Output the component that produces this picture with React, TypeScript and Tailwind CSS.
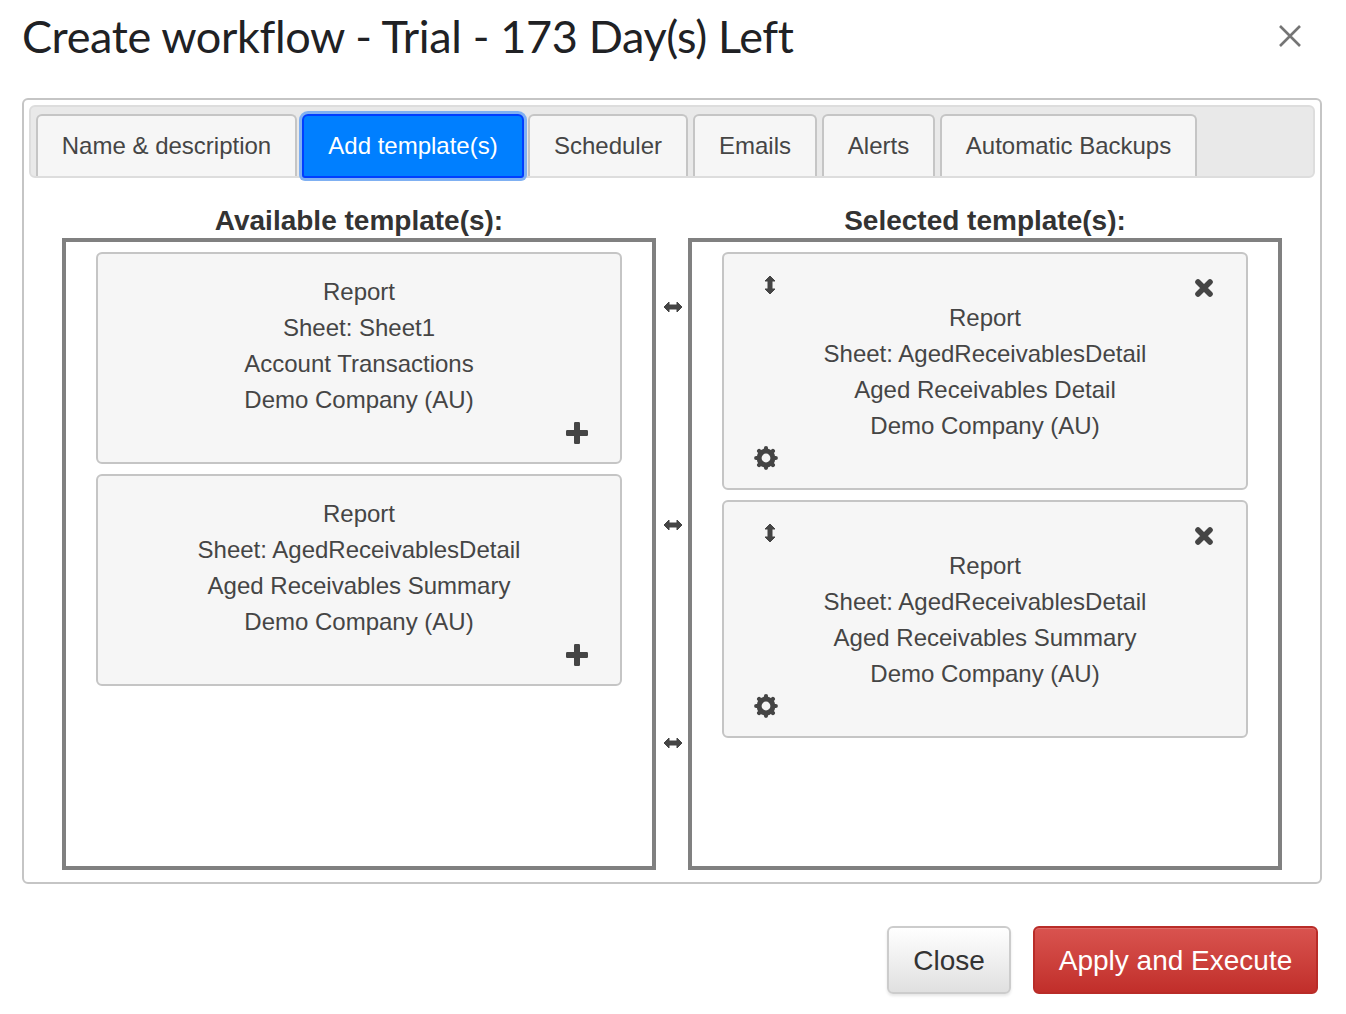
const tabs = [
    { label: 'Name & description', width: 'w-[261px]' },
    { label: 'Add template(s)', width: 'w-[222px]', active: true },
    { label: 'Scheduler', width: 'w-[160px]' },
    { label: 'Emails', width: 'w-[124px]' },
    { label: 'Alerts', width: 'w-[113px]' },
    { label: 'Automatic Backups', width: 'w-[257px]' },
];

const available = [
    ['Report', 'Sheet: Sheet1', 'Account Transactions', 'Demo Company (AU)'],
    ['Report', 'Sheet: AgedReceivablesDetail', 'Aged Receivables Summary', 'Demo Company (AU)'],
];

const selected = [
    ['Report', 'Sheet: AgedReceivablesDetail', 'Aged Receivables Detail', 'Demo Company (AU)'],
    ['Report', 'Sheet: AgedReceivablesDetail', 'Aged Receivables Summary', 'Demo Company (AU)'],
];

function ArrowsH({ className }: { className: string }) {
    return (
        <svg viewBox="0 0 20 14" className={className} fill="currentColor" stroke="currentColor" strokeWidth="1" strokeLinejoin="round">
            <path d="M1 7L6 2V5H14V2L19 7L14 12V9H6V12Z" />
        </svg>
    );
}

function ArrowsV({ className }: { className: string }) {
    return (
        <svg viewBox="0 0 14 20" className={className} fill="currentColor" stroke="currentColor" strokeWidth="1" strokeLinejoin="round">
            <path d="M7 1L12 6H9V14H12L7 19L2 14H5V6H2Z" />
        </svg>
    );
}

function TimesIcon({ className }: { className: string }) {
    return (
        <svg viewBox="0 0 20 20" className={className} fill="none" stroke="currentColor" strokeWidth="5.6" strokeLinecap="round">
            <path d="M4 4L16 16M16 4L4 16" />
        </svg>
    );
}

function PlusIcon({ className }: { className: string }) {
    return (
        <svg viewBox="0 0 22 22" className={className} fill="currentColor">
            <rect x="8" y="0" width="6" height="22" rx="1.2" />
            <rect x="0" y="8" width="22" height="6" rx="1.2" />
        </svg>
    );
}

function GearIcon({ className }: { className: string }) {
    return (
        <svg viewBox="0 0 24 24" className={className} fill="none" stroke="currentColor">
            <circle cx="12" cy="12" r="6.9" strokeWidth="5" />
            <g strokeWidth="4.2" strokeLinecap="round">
                <path d="M12 2.2V4M12 20V21.8M2.2 12H4M20 12H21.8" />
                <path d="M5.1 5.1L6.3 6.3M17.7 17.7L18.9 18.9M5.1 18.9L6.3 17.7M17.7 6.3L18.9 5.1" />
            </g>
        </svg>
    );
}

function Lines({ lines }: { lines: string[] }) {
    return (
        <div className="text-center text-[24px] leading-[36px] text-[#454545]">
            {lines.map((line) => (
                <div key={line}>{line}</div>
            ))}
        </div>
    );
}

function AvailableCard({ lines }: { lines: string[] }) {
    return (
        <div className="relative h-[212px] w-[526px] rounded-[6px] border-2 border-[#c5c5c5] bg-[#f6f6f6] pt-[20px]">
            <Lines lines={lines} />
            <PlusIcon className="absolute right-[32px] bottom-[18px] h-[22px] w-[22px] text-[#454545]" />
        </div>
    );
}

function SelectedCard({ lines }: { lines: string[] }) {
    return (
        <div className="relative h-[238px] w-[526px] rounded-[6px] border-2 border-[#c5c5c5] bg-[#f6f6f6] pt-[46px]">
            <ArrowsV className="absolute top-[21px] left-[39px] h-[20px] w-[14px] text-[#454545]" />
            <TimesIcon className="absolute top-[24px] right-[32px] h-[20px] w-[20px] text-[#454545]" />
            <Lines lines={lines} />
            <GearIcon className="absolute bottom-[18px] left-[30px] h-[24px] w-[24px] text-[#454545]" />
        </div>
    );
}

export default function App() {
    return (
        <div className="h-[1014px] w-[1346px] overflow-hidden bg-white font-['Liberation_Sans',Arial,sans-serif]">
            <div className="flex h-[98px] items-start justify-between pt-[7px] pr-[44px] pl-[22px]">
                <h1 className="font-['Lato',sans-serif] text-[45px] leading-[58px] font-normal tracking-[-0.35px] text-[#202124]">
                    Create workflow - Trial - 173 Day(s) Left
                </h1>
                <svg viewBox="0 0 24 24" className="mt-[17px] h-[24px] w-[24px] text-[#757575]" fill="none" stroke="currentColor" strokeWidth="2.6">
                    <path d="M2 2L22 22M22 2L2 22" />
                </svg>
            </div>

            <div className="mx-[22px] h-[786px] w-[1300px] rounded-[6px] border-2 border-[#c5c5c5] p-[5px]">
                <div className="flex h-[73px] gap-[5px] rounded-[6px] border-2 border-[#dddddd] bg-[#e9e9e9] pt-[7px] pl-[5px]">
                    {tabs.map((tab) =>
                        tab.active ? (
                            <div
                                key={tab.label}
                                className={`${tab.width} -mr-px flex h-[64px] items-center justify-center rounded-t-[6px] rounded-b-[3px] border-2 border-[#003eff] bg-[#007fff] text-[24px] text-white shadow-[0_0_0_3px_#7fb0f2]`}
                            >
                                {tab.label}
                            </div>
                        ) : (
                            <div
                                key={tab.label}
                                className={`${tab.width} flex h-[62px] items-center justify-center rounded-t-[6px] border-2 border-b-0 border-[#c5c5c5] bg-[#f6f6f6] text-[24px] text-[#454545]`}
                            >
                                {tab.label}
                            </div>
                        ),
                    )}
                </div>

                <div className="mt-[25px] flex pl-[33px]">
                    <div className="w-[594px]">
                        <h2 className="text-center text-[28px] leading-[35px] font-bold text-[#333333]">Available template(s):</h2>
                        <div className="flex h-[632px] flex-col gap-[10px] border-4 border-[#808080] pt-[10px] pl-[30px]">
                            {available.map((lines) => (
                                <AvailableCard key={lines[2]} lines={lines} />
                            ))}
                        </div>
                    </div>

                    <div className="flex w-[32px] flex-col items-center gap-[204px] pt-[97px] pl-[2px] text-[#454545]">
                        <ArrowsH className="h-[14px] w-[20px] shrink-0" />
                        <ArrowsH className="h-[14px] w-[20px] shrink-0" />
                        <ArrowsH className="h-[14px] w-[20px] shrink-0" />
                    </div>

                    <div className="w-[594px]">
                        <h2 className="text-center text-[28px] leading-[35px] font-bold text-[#333333]">Selected template(s):</h2>
                        <div className="flex h-[632px] flex-col gap-[10px] border-4 border-[#808080] pt-[10px] pl-[30px]">
                            {selected.map((lines) => (
                                <SelectedCard key={lines[2]} lines={lines} />
                            ))}
                        </div>
                    </div>
                </div>
            </div>

            <div className="mt-[42px] flex justify-end gap-[22px] pr-[28px]">
                <button className="h-[68px] w-[124px] rounded-[6px] border-2 border-[#cccccc] bg-gradient-to-b from-white to-[#e0e0e0] pt-[2px] text-[28px] text-[#333333] shadow-[0_2px_3px_rgba(0,0,0,0.1)]">
                    Close
                </button>
                <button className="h-[68px] w-[285px] rounded-[6px] border-2 border-[#b92c28] bg-gradient-to-b from-[#d9534f] to-[#c12e2a] pt-[2px] text-[28px] text-white shadow-[inset_0_1px_0_rgba(255,255,255,0.15)]">
                    Apply and Execute
                </button>
            </div>
        </div>
    );
}
